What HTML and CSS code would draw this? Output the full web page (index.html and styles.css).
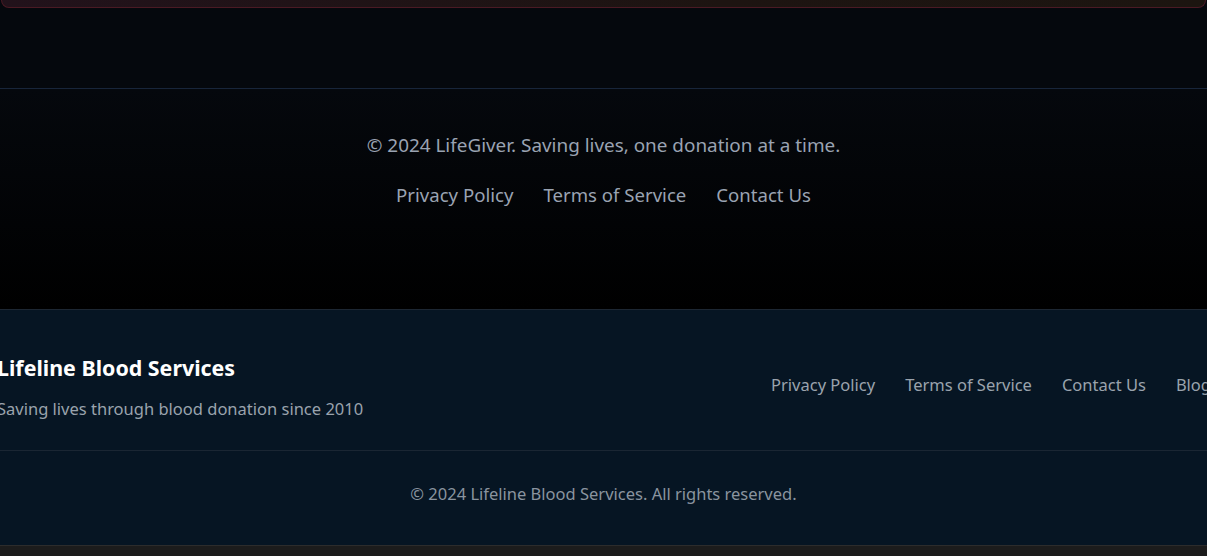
FILE: index.html
```html
<!DOCTYPE html>
<html lang="en">
<head>
<meta charset="utf-8">
<title>LifeGiver</title>
<link rel="stylesheet" href="styles.css">
</head>
<body>
  <div class="card-edge"></div>
  <div class="spacer"></div>
  <footer class="site-footer">
    <p class="site-copy">© 2024 LifeGiver. Saving lives, one donation at a time.</p>
    <nav class="site-links">
      <a href="#">Privacy Policy</a>
      <a href="#">Terms of Service</a>
      <a href="#">Contact Us</a>
    </nav>
  </footer>
  <footer class="main-footer">
    <div class="main-row">
      <div class="brand">
        <h3 class="brand-title">Lifeline Blood Services</h3>
        <p class="brand-sub">Saving lives through blood donation since 2010</p>
      </div>
      <nav class="main-links">
        <a href="#">Privacy Policy</a>
        <a href="#">Terms of Service</a>
        <a href="#">Contact Us</a>
        <a href="#">Blog</a>
      </nav>
    </div>
    <div class="main-bottom">
      <p>© 2024 Lifeline Blood Services. All rights reserved.</p>
    </div>
  </footer>
  <div class="bottom-bar"></div>
</body>
</html>
```

FILE: styles.css
```css
html, body {
  margin: 0;
  padding: 0;
}
body {
  background: #05080d;
  font-family: "Noto Sans", "Open Sans", sans-serif;
  overflow-x: hidden;
}
p, h3 { margin: 0; }
a { text-decoration: none; }

.card-edge {
  height: 7px;
  margin: 0 1px;
  border: 1px solid #4a1a24;
  border-top: none;
  border-radius: 0 0 14px 14px;
  background: linear-gradient(90deg, #22121b, #1d1411 60%, #1c1510);
}
.spacer { height: 80px; }

.site-footer {
  border-top: 1px solid #18253a;
  background: linear-gradient(180deg, #05080d 0%, #000000 100%);
  padding: 43px 0 100px;
  text-align: center;
  color: #9aa3b2;
}
.site-copy {
  font-size: 18.9px;
  line-height: 26px;
}
.site-links {
  margin-top: 23px;
  display: flex;
  justify-content: center;
  gap: 30px;
}
.site-links a {
  color: #9aa3b2;
  font-size: 18.6px;
  line-height: 28px;
}

.main-footer {
  border-top: 1px solid #1d2733;
  background: #061523;
}
.main-row {
  display: flex;
  justify-content: space-between;
  align-items: center;
  margin: 0 -4px 0 -3px;
  padding: 44px 0 29px;
}
.brand-title {
  color: #ffffff;
  font-size: 21.4px;
  font-weight: 700;
  line-height: 28px;
}
.brand-sub {
  margin-top: 15px;
  color: #9aa3ad;
  font-size: 16.5px;
  line-height: 24px;
}
.main-links {
  display: flex;
  gap: 30px;
  margin-bottom: 6px;
}
.main-links a {
  color: #9aa3ad;
  font-size: 16.5px;
  line-height: 24px;
}
.main-bottom {
  border-top: 1px solid #1a2633;
  padding: 31px 0 39px;
  text-align: center;
}
.main-bottom p {
  color: #8a949f;
  font-size: 16.5px;
  line-height: 24px;
}
.bottom-bar {
  height: 10px;
  border-top: 1px solid #2c2c2c;
  background: #1c1c1c;
}
```
